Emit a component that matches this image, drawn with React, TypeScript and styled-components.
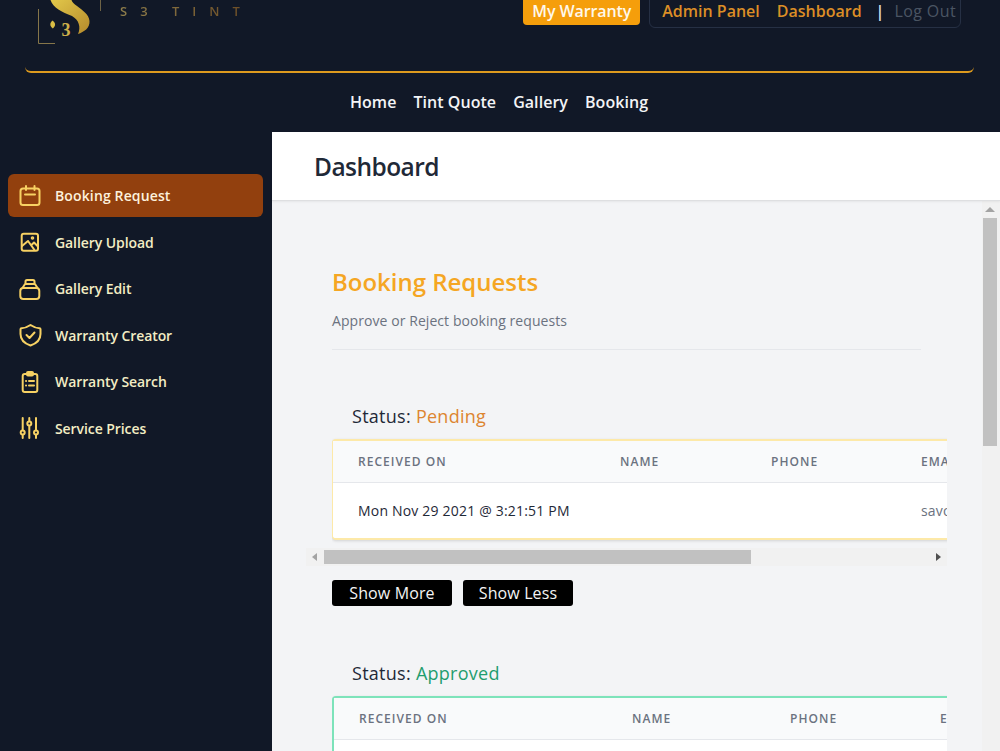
import React from "react"
import styled, { createGlobalStyle } from "styled-components"

const GlobalStyle = createGlobalStyle`
  html, body {
    margin: 0;
    height: 100%;
    overflow: hidden;
    background: #111827;
  }
  body {
    font-family: "Open Sans", "Noto Sans", "Liberation Sans", sans-serif;
  }
  * {
    box-sizing: border-box;
  }
`

const Page = styled.div`
  display: flex;
  flex-direction: column;
  height: 751px;
  background: #111827;
`

const Header = styled.header`
  flex: none;
  height: 132px;
`

const TopRow = styled.div`
  display: flex;
  align-items: flex-start;
  height: 73px;
  margin: 0 26px 0 25px;
  padding: 0 13px 0 13px;
  border-bottom: 2px solid #dd9a1e;
  border-radius: 0 0 6px 6px;
`

const BrandName = styled.span`
  margin: 3px 0 0 14px;
  font-size: 13px;
  font-weight: 600;
  line-height: 16px;
  letter-spacing: 13px;
  word-spacing: -5px;
  white-space: pre;
  color: transparent;
  background: linear-gradient(90deg, #8f7e4b, #6a4a24);
  background-clip: text;
`

const WarrantyButton = styled.a`
  margin-left: auto;
  height: 25px;
  padding: 0 9px;
  border-radius: 0 0 4px 4px;
  background: #f59e0b;
  color: #fff8ea;
  font-size: 16px;
  font-weight: 600;
  line-height: 23px;
  letter-spacing: -0.1px;
`

const AccountBox = styled.div`
  display: flex;
  height: 29px;
  margin: -1px 0 0 9px;
  padding: 0 4px 0 12px;
  border: 1px solid #263044;
  border-radius: 0 0 6px 6px;
  font-size: 16px;
  font-weight: 600;
  line-height: 23px;
`

const AccountLink = styled.a<{ $gap: number }>`
  margin-right: ${({ $gap }) => $gap}px;
  color: #dc8e26;
`

const Divider = styled.span`
  margin-right: 10px;
  color: #e5e7eb;
`

const LogOut = styled.a`
  color: #4b5563;
  font-weight: 400;
  letter-spacing: 0.4px;
`

const MainNav = styled.nav`
  display: flex;
  justify-content: center;
  gap: 17px;
  padding-top: 17px;
  padding-right: 2px;
`

const NavLink = styled.a`
  color: #f3f4f6;
  font-size: 16px;
  font-weight: 600;
  line-height: 24px;
  letter-spacing: 0.05px;
`

const Body = styled.div`
  display: flex;
  flex: 1;
  min-height: 0;
`

const Sidebar = styled.aside`
  flex: none;
  width: 272px;
  padding: 42px 8px 0;
`

const SideItem = styled.a<{ $active?: boolean }>`
  display: flex;
  align-items: center;
  gap: 13px;
  height: 43px;
  margin-bottom: 3.6px;
  padding-left: 10px;
  width: 255px;
  border-radius: 6px;
  background: ${({ $active }) => ($active ? "#92400e" : "transparent")};
  color: ${({ $active }) => ($active ? "#fdf1dc" : "#f3edc4")};
  font-size: 14px;
  font-weight: 600;
  letter-spacing: ${({ $active }) => ($active ? "0.13px" : "-0.08px")};

  svg {
    flex: none;
    width: 24px;
    height: 24px;
    color: #f7d163;
  }
`

const Main = styled.main`
  display: flex;
  flex: 1;
  flex-direction: column;
  min-width: 0;
`

const TitleBar = styled.div`
  flex: none;
  height: 69px;
  padding-left: 43px;
  background: #fff;
  border-bottom: 1px solid #dedfe1;
  box-shadow: 0 1px 2px rgba(0, 0, 0, 0.06);
  position: relative;
`

const PageTitle = styled.h1`
  margin: 0 0 0 -1px;
  color: #1f2937;
  font-size: 24.5px;
  font-weight: 600;
  line-height: 70px;
  letter-spacing: -0.55px;
`

const ContentRow = styled.div`
  display: flex;
  flex: 1;
  min-height: 0;
`

const Content = styled.div`
  flex: 1;
  min-width: 0;
  padding: 62px 35px 0 60px;
  background: #f3f4f6;
  overflow: hidden;
`

const VerticalBar = styled.div`
  display: flex;
  flex: none;
  flex-direction: column;
  align-items: center;
  width: 18px;
  padding-right: 2px;
  background: #f1f1f1;
`

const VerticalArrow = styled.div`
  flex: none;
  width: 0;
  height: 0;
  margin: 6px 0;
  border-left: 5px solid transparent;
  border-right: 5px solid transparent;
  border-bottom: 5px solid #a3a3a3;
`

const VerticalThumb = styled.div`
  width: 14px;
  height: 228px;
  background: #c1c1c1;
`

const SectionTitle = styled.h2`
  margin: 0;
  color: #f5a623;
  font-size: 24px;
  font-weight: 600;
  line-height: 38px;
  letter-spacing: -0.02px;
`

const SectionText = styled.p`
  margin: 10px 0 0;
  color: #6b7280;
  font-size: 14px;
  line-height: 20px;
  letter-spacing: 0.07px;
`

const Rule = styled.hr`
  width: 589px;
  margin: 18px 0 0;
  border: 0;
  border-top: 1px solid #e5e7eb;
`

const StatusHeading = styled.h3<{ $top: number }>`
  margin: ${({ $top }) => $top}px 0 10px 20px;
  color: #1f2937;
  font-size: 18px;
  font-weight: 500;
  line-height: 26px;
  letter-spacing: 0.27px;
`

const StatusWord = styled.span<{ $color: string }>`
  color: ${({ $color }) => $color};
`

const TableClip = styled.div`
  width: 615px;
  overflow-x: clip;
`

const Table = styled.table<{ $accent: string; $sideWidth: number }>`
  width: 885px;
  table-layout: fixed;
  border-collapse: separate;
  border-spacing: 0;
  background: #fff;
  border-radius: 4px;
  border-top: 2px solid ${({ $accent }) => $accent};
  border-bottom: 2px solid ${({ $accent }) => $accent};
  border-left: ${({ $sideWidth }) => $sideWidth}px solid ${({ $accent }) => $accent};
  box-shadow: 0 1px 3px rgba(0, 0, 0, 0.14);
`

const Col = styled.col<{ $w: number }>`
  width: ${({ $w }) => $w}px;
`

const HeadCell = styled.th`
  height: 42px;
  padding: 0 0 0 25px;
  background: #f9fafb;
  border-bottom: 1px solid #e5e7eb;
  color: #6b7280;
  font-size: 12px;
  font-weight: 600;
  text-align: left;
  letter-spacing: 1.05px;
  white-space: nowrap;
`

const BodyCell = styled.td<{ $muted?: boolean }>`
  height: 55px;
  padding: 0 0 0 25px;
  color: ${({ $muted }) => ($muted ? "#6b7280" : "#1f2937")};
  font-size: 14px;
  font-weight: ${({ $muted }) => ($muted ? 400 : 500)};
  letter-spacing: 0.19px;
  white-space: nowrap;
`

const HorizontalBar = styled.div`
  display: flex;
  align-items: center;
  width: 641px;
  height: 18px;
  margin: 8px 0 0 -26px;
  background: #f1f1f1;
`

const HorizontalArrow = styled.div<{ $right?: boolean }>`
  flex: none;
  width: 0;
  height: 0;
  margin: ${({ $right }) => ($right ? "0 6px 0 auto" : "0 7px 0 6px")};
  border-top: 4px solid transparent;
  border-bottom: 4px solid transparent;
  ${({ $right }) =>
    $right ? "border-left: 5px solid #505050;" : "border-right: 5px solid #a3a3a3;"}
`

const HorizontalThumb = styled.div`
  width: 427px;
  height: 14px;
  background: #c1c1c1;
`

const ButtonRow = styled.div`
  display: flex;
  gap: 11px;
  margin-top: 14px;
`

const BlackButton = styled.button<{ $w: number }>`
  width: ${({ $w }) => $w}px;
  height: 26px;
  padding: 0;
  border: 0;
  border-radius: 3px;
  background: #000;
  color: #f4f4f4;
  font-family: inherit;
  font-size: 16px;
  line-height: 26px;
  letter-spacing: 0.12px;
`

const LogoMark = () => (
  <svg width="68" height="46" viewBox="38 0 68 46" aria-hidden="true">
    <defs>
      <linearGradient id="gold" x1="0" y1="0" x2="1" y2="1">
        <stop offset="0" stopColor="#e2c84a" />
        <stop offset="1" stopColor="#b58a2c" />
      </linearGradient>
    </defs>
    <path d="M38.500 9V43.500H55" fill="none" stroke="#86764a" strokeWidth="1" />
    <path d="M100.500 0V11" fill="none" stroke="#6e6346" strokeWidth="1" />
    <path
      d="M50.500 0C53 8 62 12 72 16C79 20 81 27 78 34C84 32 90 28 89.500 21C89 14 82 10 77 6C74 4 72 2 71.500 0Z"
      fill="url(#gold)"
    />
    <path d="M52.500 20.500C49.500 23 49.500 26 52.800 28.500C55.800 26 56 23 52.500 20.500Z" fill="#d9bd45" />
    <text x="61.500" y="35.500" fontFamily="'Liberation Serif', serif" fontSize="18" fontWeight="700" fill="#cdb04a">
      3
    </text>
  </svg>
)

const Icon = ({ children }: { children: React.ReactNode }) => (
  <svg viewBox="0 0 24 24" fill="none" stroke="currentColor" strokeWidth="2" strokeLinecap="round" strokeLinejoin="round">
    {children}
  </svg>
)

const CalendarIcon = () => (
  <Icon>
    <rect x="2.500" y="4.500" width="19" height="16.500" rx="2.500" />
    <path d="M8 2V6M16.500 2V6M7 10.500H17" />
  </Icon>
)

const PictureIcon = () => (
  <Icon>
    <rect x="3.700" y="3.700" width="16.300" height="17" rx="2" />
    <path d="M4 16L10 11L16.500 20M13.500 15L16 12.500L19.500 16" />
    <circle cx="14.500" cy="8" r="0.800" />
  </Icon>
)

const StackIcon = () => (
  <Icon>
    <rect x="2.300" y="11" width="19" height="11" rx="3" />
    <path d="M4.500 11L7 7H17L19.500 11M7.500 7V4.500A1.500 1.500 0 0 1 9 3H15A1.500 1.500 0 0 1 16.500 4.500V7" />
  </Icon>
)

const ShieldIcon = () => (
  <Icon>
    <path d="M12.500 2C15.500 4 18.500 5.200 21.500 5.200C22.200 5.200 22.500 5.600 22.500 6.200V11C22.500 16.500 18.500 20.500 12.500 22.500C6.500 20.500 2.500 16.500 2.500 11V6.200C2.500 5.600 2.800 5.200 3.500 5.200C6.500 5.200 9.500 4 12.500 2Z" />
    <path d="M8.500 12L11.500 15L16.500 9.500" />
  </Icon>
)

const ClipboardIcon = () => (
  <Icon>
    <rect x="4.700" y="4" width="14.600" height="18" rx="2" />
    <rect x="9" y="2" width="6" height="3.500" rx="1" />
    <path d="M8 11H8.100M11 11H16M8 15.500H8.100M11 15.500H16" />
  </Icon>
)

const SlidersIcon = () => (
  <Icon>
    <path d="M4.700 2V14M4.700 19V22M11.300 2V5M11.300 10V22M18 2V14M18 19V22" />
    <circle cx="4.700" cy="16.500" r="2" />
    <circle cx="11.300" cy="7.500" r="2" />
    <circle cx="18" cy="16.500" r="2" />
  </Icon>
)

const sideItems = [
  { label: "Booking Request", icon: <CalendarIcon />, active: true },
  { label: "Gallery Upload", icon: <PictureIcon /> },
  { label: "Gallery Edit", icon: <StackIcon /> },
  { label: "Warranty Creator", icon: <ShieldIcon /> },
  { label: "Warranty Search", icon: <ClipboardIcon /> },
  { label: "Service Prices", icon: <SlidersIcon /> },
]

const BookingTable = ({
  accent,
  sideWidth,
  columns,
  lastHead,
  date,
  email,
}: {
  accent: string
  sideWidth: number
  columns: number[]
  lastHead: string
  date?: string
  email?: string
}) => (
  <TableClip>
    <Table $accent={accent} $sideWidth={sideWidth}>
      <colgroup>
        {columns.map((w, i) => (
          <Col key={i} $w={w} />
        ))}
      </colgroup>
      <thead>
        <tr>
          <HeadCell>RECEIVED ON</HeadCell>
          <HeadCell>NAME</HeadCell>
          <HeadCell>PHONE</HeadCell>
          <HeadCell>{lastHead}</HeadCell>
        </tr>
      </thead>
      <tbody>
        <tr>
          <BodyCell>{date}</BodyCell>
          <BodyCell />
          <BodyCell />
          <BodyCell $muted>{email}</BodyCell>
        </tr>
      </tbody>
    </Table>
  </TableClip>
)

export default function App() {
  return (
    <Page>
      <GlobalStyle />
      <Header>
        <TopRow>
          <LogoMark />
          <BrandName>S3 TINT</BrandName>
          <WarrantyButton>My Warranty</WarrantyButton>
          <AccountBox>
            <AccountLink $gap={17}>Admin Panel</AccountLink>
            <AccountLink $gap={14}>Dashboard</AccountLink>
            <Divider>|</Divider>
            <LogOut>Log Out</LogOut>
          </AccountBox>
        </TopRow>
        <MainNav>
          <NavLink>Home</NavLink>
          <NavLink>Tint Quote</NavLink>
          <NavLink>Gallery</NavLink>
          <NavLink>Booking</NavLink>
        </MainNav>
      </Header>
      <Body>
        <Sidebar>
          {sideItems.map((item) => (
            <SideItem key={item.label} $active={item.active}>
              {item.icon}
              {item.label}
            </SideItem>
          ))}
        </Sidebar>
        <Main>
          <TitleBar>
            <PageTitle>Dashboard</PageTitle>
          </TitleBar>
          <ContentRow>
            <Content>
              <SectionTitle>Booking Requests</SectionTitle>
              <SectionText>Approve or Reject booking requests</SectionText>
              <Rule />
              <StatusHeading $top={53}>
                Status: <StatusWord $color="#dd8530">Pending</StatusWord>
              </StatusHeading>
              <BookingTable
                accent="#fde9a8"
                sideWidth={1}
                columns={[262, 151, 150, 322]}
                lastHead="EMA"
                date="Mon Nov 29 2021 @ 3:21:51 PM"
                email="savo"
              />
              <HorizontalBar>
                <HorizontalArrow />
                <HorizontalThumb />
                <HorizontalArrow $right />
              </HorizontalBar>
              <ButtonRow>
                <BlackButton $w={120}>Show More</BlackButton>
                <BlackButton $w={110}>Show Less</BlackButton>
              </ButtonRow>
              <StatusHeading $top={54}>
                Status: <StatusWord $color="#1f9d6e">Approved</StatusWord>
              </StatusHeading>
              <BookingTable accent="#7de3ba" sideWidth={2} columns={[273, 158, 150, 304]} lastHead="E" />
            </Content>
            <VerticalBar>
              <VerticalArrow />
              <VerticalThumb />
            </VerticalBar>
          </ContentRow>
        </Main>
      </Body>
    </Page>
  )
}
